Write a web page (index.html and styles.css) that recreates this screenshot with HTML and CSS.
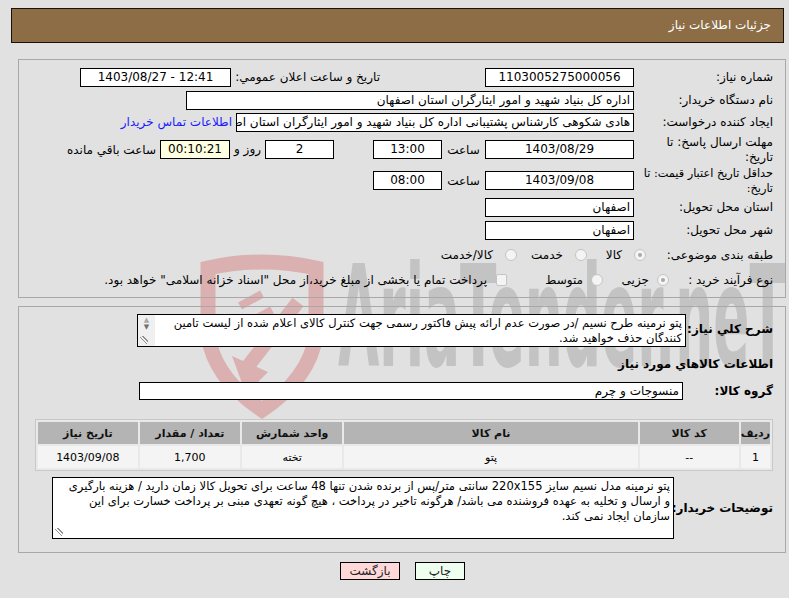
FILE: index.html
```html
<!DOCTYPE html>
<html lang="fa" dir="rtl">
<head>
<meta charset="utf-8">
<title>جزئیات اطلاعات نیاز</title>
<link rel="stylesheet" href="styles.css">
</head>
<body>
<div class="watermark" aria-hidden="true">
  <svg class="wm" width="789" height="598" viewBox="0 0 789 598">
    <g fill="none" stroke="#dbb0b0">
      <path d="M208 268 Q262 256 316 268 L316 335 Q310 378 262 410 Q214 378 208 335 Z" stroke-width="15"/>
      <path d="M298 302 L248 366" stroke-width="14"/>
      <path d="M240 306 L262 294 M250 322 L272 310" stroke-width="8"/>
    </g>
    <path d="M232 356 L246 394 L268 372 Z" fill="#dbb0b0"/>
    <text class="wm-text" x="338" y="366" textLength="448" lengthAdjust="spacingAndGlyphs">AriaTender.neT</text>
  </svg>
</div>

<div class="page">
  <div class="header">جزئیات اطلاعات نیاز</div>

  <div class="panel p1">
    <div class="row r1">
      <span class="lbl">شماره نیاز:</span>
      <span class="box w149 c">1103005275000056</span>
      <span class="lbl2">تاريخ و ساعت اعلان عمومي:</span>
      <span class="box w151 c" dir="ltr">1403/08/27 - 12:41</span>
    </div>
    <div class="row r2">
      <span class="lbl">نام دستگاه خريدار:</span>
      <span class="box w448">اداره كل بنياد شهيد و امور ايثارگران استان اصفهان</span>
    </div>
    <div class="row r3">
      <span class="lbl">ایجاد کننده درخواست:</span>
      <span class="box w398">هادی شکوهی کارشناس پشتیبانی اداره کل بنیاد شهید و امور ایثارگران استان اصفهان</span>
      <a class="link">اطلاعات تماس خريدار</a>
    </div>
    <div class="row r4">
      <span class="lbl two">مهلت ارسال پاسخ: تا<br>تاریخ:</span>
      <span class="box w149 c">1403/08/29</span>
      <span class="saat">ساعت</span>
      <span class="box w69 c">13:00</span>
      <span class="box w69 c gap39">2</span>
      <span class="roz">روز و</span>
      <span class="box w70 c yellow">00:10:21</span>
      <span class="remain">ساعت باقي مانده</span>
    </div>
    <div class="row r5">
      <span class="lbl two narrow">حداقل تاريخ اعتبار قيمت: تا<br>تاريخ:</span>
      <span class="box w149 c">1403/09/08</span>
      <span class="saat">ساعت</span>
      <span class="box w69 c">08:00</span>
    </div>
    <div class="row r6">
      <span class="lbl">استان محل تحويل:</span>
      <span class="box w149">اصفهان</span>
    </div>
    <div class="row r7">
      <span class="lbl">شهر محل تحويل:</span>
      <span class="box w149">اصفهان</span>
    </div>
    <div class="row r8">
      <span class="lbl">طبقه بندی موضوعی:</span>
      <span class="opt a1"><span class="radio on"></span>کالا</span>
      <span class="opt a2"><span class="radio"></span>خدمت</span>
      <span class="opt a3"><span class="radio"></span>کالا/خدمت</span>
    </div>
    <div class="row r9">
      <span class="lbl">نوع فرآیند خرید :</span>
      <span class="opt b1"><span class="radio on"></span>جزیی</span>
      <span class="opt b2"><span class="radio"></span>متوسط</span>
      <span class="opt b3"><span class="check"></span>پرداخت تمام یا بخشی از مبلغ خرید،از محل "اسناد خزانه اسلامی" خواهد بود.</span>
    </div>
  </div>

  <div class="panel p2">
    <div class="row sharh">
      <span class="blbl l87">شرح کلي نياز:</span>
      <div class="tarea ta1">
        <div class="ttext">پتو نرمینه طرح نسیم /در صورت عدم ارائه پیش فاکتور رسمی جهت کنترل کالای اعلام شده از لیست تامین<br>کنندگان حذف خواهید شد.</div>
        <div class="sbar"><span class="arr">▲</span><span class="arr">▼</span><span class="grip"></span></div>
      </div>
    </div>
    <div class="title">اطلاعات کالاهاي مورد نياز</div>
    <div class="row grp">
      <span class="blbl l90">گروه کالا:</span>
      <span class="box w544">منسوجات و چرم</span>
    </div>
    <table class="items">
      <thead>
        <tr><th class="c1">ردیف</th><th class="c2">کد کالا</th><th class="c3">نام کالا</th><th class="c4">واحد شمارش</th><th class="c5">تعداد / مقدار</th><th class="c6">تاریخ نیاز</th></tr>
      </thead>
      <tbody>
        <tr><td>1</td><td>--</td><td>پتو</td><td>تخته</td><td>1,700</td><td>1403/09/08</td></tr>
      </tbody>
    </table>
    <div class="row tozih">
      <span class="blbl l99">توضیحات خریدار:</span>
      <div class="tarea ta2">
        <div class="ttext">پتو نرمینه مدل نسیم سایز 220x155 سانتی متر/پس از برنده شدن تنها 48 ساعت برای تحویل کالا زمان دارید / هزینه بارگیری<br>و ارسال و تخلیه به عهده فروشنده می باشد/ هرگونه تاخیر در پرداخت ، هیچ گونه تعهدی مبنی بر پرداخت خسارت برای این<br>سازمان ایجاد نمی کند.</div>
        <span class="grip"></span>
      </div>
    </div>
  </div>

  <div class="buttons">
    <span class="btn print">چاپ</span>
    <span class="btn back">بازگشت</span>
  </div>
</div>
</body>
</html>
```
FILE: styles.css
```css
* { box-sizing: border-box; }
html, body { margin: 0; padding: 0; }
body {
  background: #e1e1e1;
  font-family: "DejaVu Sans", sans-serif;
  font-size: 12px;
  color: #000;
  width: 789px;
  height: 598px;
  overflow: hidden;
  position: relative;
}

/* watermark behind the content */
.watermark { position: absolute; left: 0; top: 0; width: 789px; height: 598px; z-index: 0; }
.wm { display: block; }
.wm-text {
  font-family: "DejaVu Sans Condensed", "DejaVu Sans", sans-serif;
  font-size: 140px; font-weight: bold; fill: #c3c3c3;
  direction: ltr; unicode-bidi: embed;
}

.page { position: relative; z-index: 1; padding-top: 8px; }

.header {
  margin: 0 5px 0 11px;
  height: 35px;
  background: #8c6d46;
  border: 1px solid #1a1208;
  color: #fff;
  font-size: 12px;
  line-height: 33px;
  padding-right: 12px;
}

.panel {
  margin: 0 3px 0 18px;
  border: 1px solid #a8a8a8;
}
.p1 { margin-top: 16px; height: 239px; padding: 8px 12px 0 0; }
.p2 { margin-top: 8px; height: 247px; padding: 7px 12px 0 14px; }

.row { display: flex; align-items: flex-start; white-space: nowrap; }
.lbl { width: 139px; flex: none; line-height: 19px; }
.lbl.two { line-height: 15px; white-space: nowrap; margin-top: -5px; }
.lbl.narrow { font-size: 11.3px; letter-spacing: -0.2px; }

.box {
  flex: none; display: block;
  background: #fff; border: 1px solid #000;
  height: 19px; line-height: 17px; padding: 0 3px;
  overflow: hidden; white-space: nowrap; text-align: right;
  font-size: 12px;
}
.box.c { text-align: center; }
.yellow { background: #ffffe1; }
.w149 { width: 149px; } .w151 { width: 151px; } .w448 { width: 448px; }
.w398 { width: 398px; } .w69 { width: 69px; } .w70 { width: 70px; }
.w544 { width: 544px; height: 18px; line-height: 16px; }

.r1 { height: 19px; margin-bottom: 4px; }
.r2 { height: 19px; margin-bottom: 3px; }
.r3 { height: 19px; margin-bottom: 8px; }
.r4 { height: 31px; }
.r5 { height: 27px; }
.r6 { height: 19px; margin-bottom: 4px; }
.r7 { height: 19px; margin-bottom: 6px; }
.r8 { height: 18px; margin-bottom: 7px; align-items: center; }
.r9 { height: 18px; align-items: center; }

.lbl2 { width: 149px; margin-right: 105px; flex: none; line-height: 19px; }
.link { color: #1a1aff; margin-right: 4px; line-height: 19px; }
.saat { width: 43px; text-align: center; line-height: 20px; }
.gap39 { margin-right: 39px; }
.roz { width: 35px; text-align: center; line-height: 19px; }
.remain { margin-right: 4px; line-height: 20px; }

.r8 .lbl { width: 127px; }
.r9 .lbl { width: 104px; }
.opt { display: flex; align-items: center; line-height: 18px; flex: none; }
.a1 { width: 59px; } .a2 { width: 70px; }
.b1 { width: 66px; } .b2 { width: 96px; }
.radio {
  width: 12px; height: 12px; border-radius: 50%;
  border: 1px solid #c4c4c4; background: #f4f4f4;
  margin-left: 12px; position: relative; flex: none;
}
.b1 .radio, .b2 .radio { margin-left: 8px; }
.radio.on::after {
  content: ""; position: absolute; left: 3px; top: 3px;
  width: 4px; height: 4px; border-radius: 50%; background: #a8a8a8;
}
.check {
  width: 11px; height: 12px; border: 1px solid #c4c4c4; border-radius: 2px;
  background: #f4f4f4; margin-left: 9px; flex: none;
}

/* panel 2 */
.blbl { font-weight: bold; font-size: 12px; flex: none; }
.l87 { width: 87px; line-height: 18px; padding-top: 6px; }
.l90 { width: 90px; line-height: 18px; }
.l99 { width: 99px; line-height: 18px; padding-top: 22px; }

.tarea {
  background: #fff; border: 1px solid #000; display: flex; position: relative;
  font-size: 11.5px; overflow: hidden;
}
.ta1 { width: 549px; height: 33px; }
.ta2 { width: 622px; height: 62px; }
.ttext { flex: 1; padding: 1px 3px 0 3px; line-height: 15px; white-space: nowrap; overflow: hidden; }
.sbar {
  width: 17px; flex: none; background: #f0f0f0;
  display: flex; flex-direction: column; align-items: center; position: relative;
}
.arr { font-size: 7px; line-height: 7px; color: #707070; }
.arr:first-child { color: #a8a8a8; margin-top: 2px; }
.grip {
  position: absolute; left: 2px; bottom: 2px; width: 8px; height: 8px;
  background: linear-gradient(45deg, transparent 40%, #909090 40%, #909090 48%, transparent 48%, transparent 62%, #909090 62%, #909090 70%, transparent 70%);
}

.title { font-weight: bold; font-size: 12px; line-height: 18px; margin-top: 8px; height: 27px; }
.grp { height: 18px; margin-bottom: 19px; }

.items {
  width: 738px; border-collapse: separate; border-spacing: 2px;
  border: 1px solid #c8c8c8; background: #e9e9e9;
  font-size: 11px; margin-bottom: 6px;
}
.items th {
  background: #b4b4b4; height: 22px; font-weight: bold; color: #111; padding: 0; text-align: center;
}
.items td { background: #f4f4f4; height: 22px; text-align: center; padding: 0; }
.items .c1 { width: 26px; } .items .c2 { width: 100px; } .items .c3 { width: 296px; }
.items .c4 { width: 101px; } .items .c5 { width: 101px; } .items .c6 { width: 100px; }

.tozih { height: 62px; }

.buttons { display: flex; justify-content: center; padding-left: 16px; margin-top: 9px; gap: 15px; }
.btn {
  display: block; height: 18px; border: 1px solid #000; font-size: 12px; line-height: 16px;
  text-align: center; color: #222;
}
.print { width: 50px; background: #efffef; }
.back { width: 60px; background: #ffd9d9; }
```
